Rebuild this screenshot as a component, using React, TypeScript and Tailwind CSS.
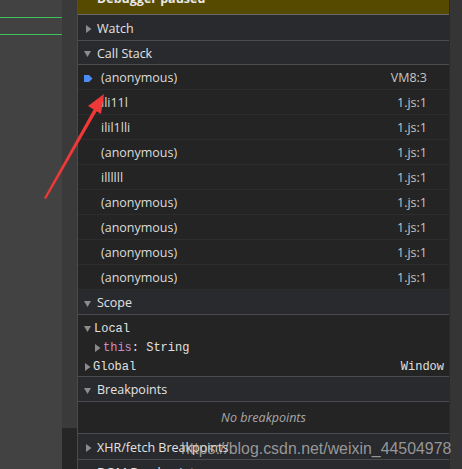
import React from "react";

const frames = [
  { name: "(anonymous)", loc: "VM8:3", current: true },
  { name: "ili11l", loc: "1.js:1" },
  { name: "ilil1lli", loc: "1.js:1" },
  { name: "(anonymous)", loc: "1.js:1" },
  { name: "illllll", loc: "1.js:1" },
  { name: "(anonymous)", loc: "1.js:1" },
  { name: "(anonymous)", loc: "1.js:1" },
  { name: "(anonymous)", loc: "1.js:1" },
  { name: "(anonymous)", loc: "1.js:1" },
];

function Tri({ open, className = "" }: { open?: boolean; className?: string }) {
  return open ? (
    <svg width="8" height="6" viewBox="0 0 8 6" className={className}>
      <path d="M0 0 H7 L3.5 6 Z" fill="#8c8c8c" />
    </svg>
  ) : (
    <svg width="6" height="8" viewBox="0 0 6 8" className={className}>
      <path d="M0 0 L5.5 4 L0 8 Z" fill="#8c8c8c" />
    </svg>
  );
}

function Header({ title, open, h = "h-[25px]" }: { title: string; open?: boolean; h?: string }) {
  return (
    <div
      className={`flex ${h} shrink-0 items-center border-b border-[#4a4c50] bg-[#292a2d] pt-[3px] text-[12.5px] text-[#e3e3e3]`}
    >
      <div className="flex w-[16px] justify-end pr-[2px]">
        <Tri open={open} />
      </div>
      <span className="pl-[3px]">{title}</span>
    </div>
  );
}

export default function App() {
  return (
    <div
      className="relative flex h-[469px] w-[462px] overflow-hidden bg-[#242424]"
      style={{ fontFamily: '"Open Sans", "Noto Sans", sans-serif' }}
    >
      {/* left area of the page */}
      <div className="flex w-[77px] shrink-0">
        <div className="flex w-[62px] flex-col bg-[#424242]">
          <div className="mt-[17px] h-[1px] bg-[#3cc25c]" />
          <div className="mt-[16px] h-[1px] bg-[#3cc25c]" />
        </div>
        <div className="flex w-[15px] flex-col">
          <div className="h-[428px] shrink-0 bg-[#3a3a3a]" />
          <div className="flex-1 bg-[#262626]" />
        </div>
      </div>

      {/* sidebar */}
      <div className="flex w-[372px] shrink-0 flex-col border-l border-[#4a4a4a]">
        <div className="mt-[-10px] flex h-[25px] shrink-0 items-center border-b border-[#6a6a6a] bg-[#564a00] pb-[5px] pl-[19px] text-[12.5px] font-bold text-[#e8e8e8]">
          Debugger paused
        </div>
        <Header title="Watch" h="h-[26px]" />
        <Header title="Call Stack" open h="h-[24px]" />
        {frames.map((f, i) => (
          <div
            key={i}
            className="flex h-[25px] shrink-0 items-center border-b border-[#2d2d2d] pt-[3px] text-[12.5px] text-[#dcdcdc]"
          >
            <div className="flex w-[23px] justify-end pr-[8px]">
              {f.current && (
                <svg width="9" height="9" viewBox="0 0 9 9">
                  <path d="M0 1 H5 L8.5 4.5 L5 8 H0 Z" fill="#4d8bf5" />
                </svg>
              )}
            </div>
            <span className="flex-1">{f.name}</span>
            <span className="pr-[22px] text-[#c4c4c4]">{f.loc}</span>
          </div>
        ))}
        <Header title="Scope" open />
        <div
          className="flex shrink-0 flex-col border-b border-[#4a4c50] pt-[4px] text-[12px] text-[#e0e0e0]"
          style={{ fontFamily: '"Liberation Mono", "DejaVu Sans Mono", monospace' }}
        >
          <div className="flex h-[19px] items-center">
            <div className="flex w-[16px] justify-end pr-[2px]">
              <Tri open />
            </div>
            <span>Local</span>
          </div>
          <div className="flex h-[19px] items-center">
            <div className="flex w-[25px] justify-end pr-[2px]">
              <Tri />
            </div>
            <span className="text-[#c98fc7]">this</span>
            <span>: String</span>
          </div>
          <div className="flex h-[19px] items-center">
            <div className="flex w-[15px] justify-end pr-[2px]">
              <Tri />
            </div>
            <span className="flex-1">Global</span>
            <span className="pr-[5px]">Window</span>
          </div>
        </div>
        <Header title="Breakpoints" open />
        <div className="flex h-[32px] shrink-0 items-center justify-center border-b border-[#4a4c50] pt-[2px] text-[12.5px] italic text-[#a8a8a8]">
          No breakpoints
        </div>
        <Header title="XHR/fetch Breakpoints" h="h-[26px]" />
        <Header title="DOM Breakpoints" />
      </div>

      {/* scrollbar */}
      <div className="flex-1 border-l border-[#2a2a2a] bg-[#353535]" />

      {/* annotation arrow */}
      <svg className="pointer-events-none absolute left-0 top-0" width="462" height="469">
        <path d="M44 198 L46 199 L98 109 L95 107 Z" fill="#f03838" />
        <path d="M104 94 L88 106 L101 114 Z" fill="#f03838" />
      </svg>

      {/* watermark */}
      <div
        className="pointer-events-none absolute left-[181px] top-[437px] text-[15.9px] text-[#c8c8c8]/70"
        style={{ fontFamily: '"Liberation Sans", Arial, sans-serif' }}
      >
        https://blog.csdn.net/weixin_44504978
      </div>
    </div>
  );
}
